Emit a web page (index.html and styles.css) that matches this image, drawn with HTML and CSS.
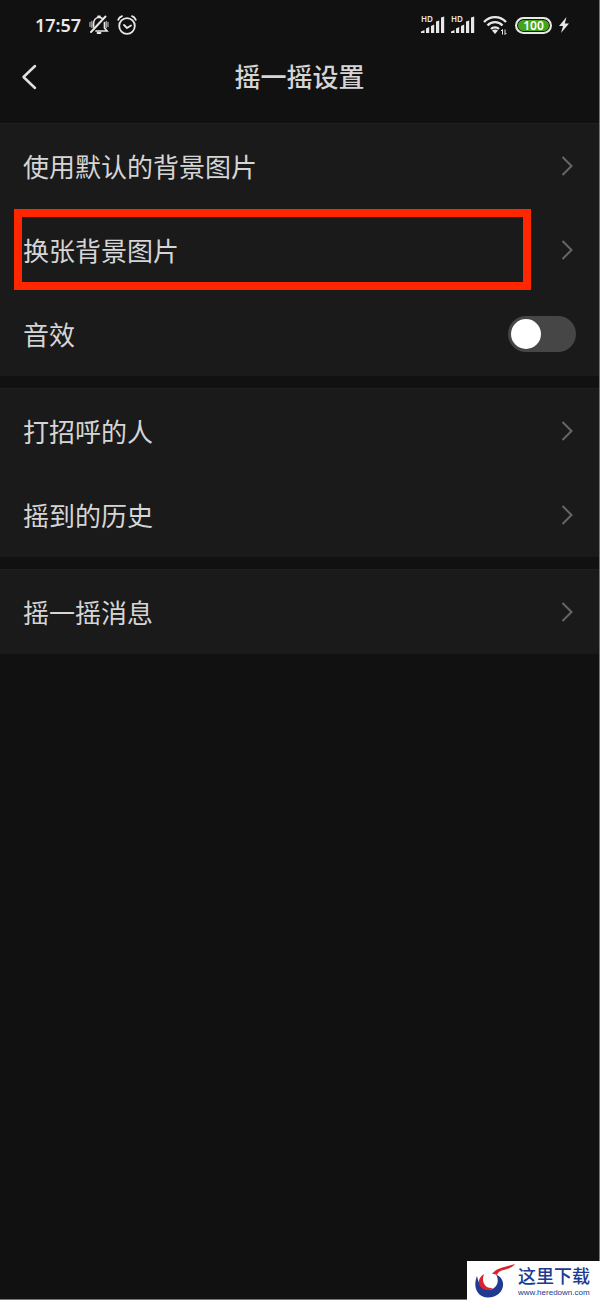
FILE: index.html
```html
<!DOCTYPE html>
<html lang="zh-CN">
<head>
<meta charset="utf-8">
<meta name="viewport" content="width=device-width, initial-scale=1">
<title>摇一摇设置</title>
<link rel="stylesheet" href="styles.css">
</head>
<body>
<svg class="defs" aria-hidden="true">
  <symbol id="chevron" viewBox="0 0 12 20"><path d="M1.500 1 10.500 10 1.500 19" fill="none" stroke="currentColor" stroke-width="2"/></symbol>
  <symbol id="signal" viewBox="0 0 24 20">
    <path d="M0 18v-1.500l3.500-1.500v3zM5 18v-4.500l3.200-1.500v6zM10 18v-7l3.200-1.500V18zM15 18V6.500l3.200-1V18zM20 18V2.500l3.200-1V18z" fill="currentColor"/>
  </symbol>
</svg>
<div class="screen">
  <div class="status">
    <div class="status-left">
      <span class="clock">17:57</span>
      <svg class="icon-status" viewBox="0 0 20 20" aria-hidden="true">
        <g fill="none" stroke="currentColor" stroke-linecap="round">
          <path d="M4.500 12V9c0-4 2.500-6.500 5.500-6.500 1.500 0 2.700.5 3.500 1.200M15.500 7.500V13l2.500 3H7" stroke-width="1.700"/>
          <path d="M2 17 16.500 1.500" stroke-width="2"/>
          <path d="M1 7.500v4M19 7.500v4M2.800 6.500v6M17.300 6.500v6" stroke-width="1.300" opacity=".7"/>
          <path d="M8.500 18h3M9 1.500h2" stroke-width="1.800"/>
        </g>
      </svg>
      <svg class="icon-status" viewBox="0 0 20 20" aria-hidden="true">
        <g fill="none" stroke="currentColor" stroke-width="1.800" stroke-linecap="round" stroke-linejoin="round">
          <circle cx="10" cy="11" r="7.800"/>
          <path d="M1.200 4.800C2 3 3.500 1.800 5 1.200M18.800 4.800C18 3 16.500 1.800 15 1.200M7 10l3 3 4-2.500"/>
        </g>
      </svg>
    </div>
    <div class="status-right">
      <span class="sim"><span class="hd">HD</span><svg class="bars" aria-hidden="true"><use href="#signal"/></svg></span>
      <span class="sim"><span class="hd">HD</span><svg class="bars" aria-hidden="true"><use href="#signal"/></svg></span>
      <svg class="wifi" viewBox="0 0 24 20" aria-hidden="true">
        <g fill="none" stroke="currentColor" stroke-width="2.300">
          <path d="M1 7C7 .5 17 .5 23 7M4.500 10.500c4-4.500 11-4.500 15 0M8 14c2-2.300 6-2.300 8 0"/>
        </g>
        <path d="M9 15.500q3-2 6 0l-3 3.500z" fill="currentColor"/>
        <path d="M19.500 19.500v-5l-1.500 1.500M22 14.500v5l1.500-1.500" fill="none" stroke="currentColor"/>
      </svg>
      <span class="battery">100</span>
      <svg class="bolt" viewBox="0 0 12 18" aria-hidden="true"><path d="M8.500 1 1 10h4L3 17l8-9.500H6.800z" fill="currentColor"/></svg>
    </div>
  </div>

  <header class="titlebar">
    <button class="back" type="button" aria-label="返回">
      <svg viewBox="0 0 16 26" aria-hidden="true"><path d="M14 2 2.500 13 14 24" fill="none" stroke="currentColor" stroke-width="2.500" stroke-linecap="round" stroke-linejoin="round"/></svg>
    </button>
    <h1 class="title">摇一摇设置</h1>
  </header>

  <main class="groups">
    <section class="group">
      <a class="row" href="#default"><span class="label">使用默认的背景图片</span><svg class="chevron" aria-hidden="true"><use href="#chevron"/></svg></a>
      <a class="row row-marked" href="#change"><span class="label">换张背景图片</span><svg class="chevron" aria-hidden="true"><use href="#chevron"/></svg></a>
      <label class="row row-switch" for="sound"><span class="label">音效</span><input class="switch" type="checkbox" role="switch" id="sound"></label>
    </section>
    <section class="group">
      <a class="row" href="#greetings"><span class="label">打招呼的人</span><svg class="chevron" aria-hidden="true"><use href="#chevron"/></svg></a>
      <a class="row" href="#history"><span class="label">摇到的历史</span><svg class="chevron" aria-hidden="true"><use href="#chevron"/></svg></a>
    </section>
    <section class="group">
      <a class="row" href="#messages"><span class="label">摇一摇消息</span><svg class="chevron" aria-hidden="true"><use href="#chevron"/></svg></a>
    </section>
  </main>

  <div class="watermark">
    <svg class="watermark-logo" viewBox="0 0 42 36" aria-hidden="true">
      <path d="M3 13C-1 23 2 33 13 34.500 23 35 30 28 29 20c-.5-4-3-7-7-8.500 3 5 2 11-2 13.500C14 29 5 25 3 13z" fill="#203a92"/>
      <path d="M10 11c-8 5-6 14 2 16 3 .5 5-.5 7-2-8 1-12-6-9-14z" fill="#d9232e"/>
      <path d="M18 11C23 4 32 4 41 1c-3 4-7 5-11 6-4 .7-6 2-7 5-1-1-3-1-5-1z" fill="#d9232e"/>
    </svg>
    <div class="watermark-text">
      <span class="watermark-name">这里下载</span>
      <span class="watermark-url">www.heredown.com</span>
    </div>
  </div>
</div>
</body>
</html>
```

FILE: styles.css
```css
* {
  box-sizing: border-box;
}

body {
  margin: 0;
  background: #111;
  color: #d5d5d5;
  font-family: "Noto Sans", "Noto Sans CJK SC", sans-serif;
}

.defs {
  position: absolute;
  width: 0;
  height: 0;
}

.screen {
  position: relative;
  min-height: 100vh;
  border-right: 1px solid #777;
  border-bottom: 1px solid #777;
}

.status {
  display: flex;
  justify-content: space-between;
  align-items: center;
  height: 50px;
  padding: 0 29px 0 35px;
  color: #e8e8e8;
}

.status-left,
.status-right {
  display: flex;
  align-items: center;
  gap: 8px;
}

.clock {
  font: 600 18px/24px "Noto Sans", sans-serif;
}

.icon-status {
  width: 20px;
  height: 20px;
}

.sim {
  position: relative;
  display: flex;
  width: 24px;
  margin-right: -2px;
}

.hd {
  position: absolute;
  top: -1px;
  left: 0;
  font: 600 8px/10px "Noto Sans", sans-serif;
}

.bars {
  width: 24px;
  height: 20px;
}

.wifi {
  width: 24px;
  height: 20px;
  margin-left: 2px;
}

.battery {
  width: 37px;
  height: 17px;
  border: 2px solid #e8e8e8;
  border-radius: 9px;
  background: #43a51c;
  box-shadow: inset 0 0 0 1px #111;
  color: #fff;
  font: 600 12px/13px "Noto Sans", sans-serif;
  text-align: center;
}

.bolt {
  width: 12px;
  height: 18px;
  margin-left: -2px;
}

.titlebar {
  display: grid;
  grid-template-columns: 48px 1fr 48px;
  align-items: center;
  height: 73px;
  padding-bottom: 20px;
}

.back {
  display: flex;
  padding: 0 0 0 21px;
  border: 0;
  background: none;
  color: #e0e0e0;
}

.back svg {
  width: 16px;
  height: 26px;
}

.title {
  margin: 0;
  font-size: 26px;
  font-weight: 500;
  line-height: 36px;
  text-align: center;
}

.groups {
  display: flex;
  flex-direction: column;
  gap: 12px;
}

.group {
  border-top: 1px solid #1f1f1f;
  background: #1a1a1a;
}

.row {
  position: relative;
  display: flex;
  justify-content: space-between;
  align-items: center;
  height: 84px;
  padding: 0 26px 0 23px;
  color: inherit;
  font-size: 26px;
  line-height: 36px;
  text-decoration: none;
}

.label {
  padding-top: 2px;
}

.row-marked::after {
  content: "";
  position: absolute;
  inset: 1px 68px 2px 14px;
  border: 8px solid #ff2600;
}

.row-switch {
  padding-right: 23px;
}

.chevron {
  width: 12px;
  height: 20px;
  color: #666;
}

.switch {
  appearance: none;
  display: flex;
  align-items: center;
  width: 68px;
  height: 36px;
  margin: 0;
  padding: 0 3px;
  border-radius: 18px;
  background: #464646;
}

.switch::before {
  content: "";
  width: 30px;
  height: 30px;
  border-radius: 50%;
  background: #fff;
}

.switch:checked {
  justify-content: flex-end;
  background: #07c160;
}

.watermark {
  position: absolute;
  right: -1px;
  bottom: -1px;
  display: flex;
  align-items: center;
  gap: 2px;
  width: 133px;
  height: 39px;
  padding-left: 7px;
  background: #fff;
  color: #203a92;
}

.watermark-logo {
  flex: none;
  width: 42px;
  height: 36px;
}

.watermark-text {
  display: flex;
  flex-direction: column;
}

.watermark-name {
  font: 500 18px/24px "Noto Sans CJK SC", sans-serif;
}

.watermark-url {
  font: 8px/12px "Liberation Sans", sans-serif;
}
```
